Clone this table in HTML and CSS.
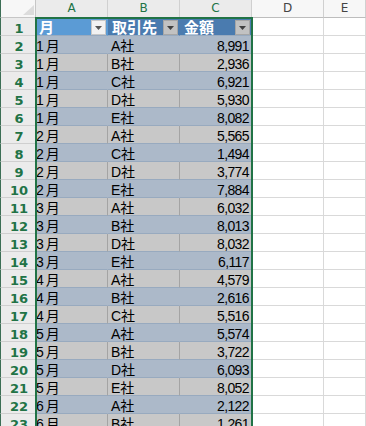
FILE: index.html
```html
<!DOCTYPE html>
<html lang="ja">
<head>
<meta charset="utf-8">
<title>Sheet</title>
<link rel="stylesheet" href="styles.css">
</head>
<body>
<div class="sheet">
  <div class="row">
    <div class="c corner"><svg class="tri" width="11" height="10" viewBox="0 0 11 10"><path d="M11 0V10H0Z" fill="#dcdcdc"/></svg></div>
    <div class="c ch">A</div>
    <div class="c ch">B</div>
    <div class="c ch">C</div>
    <div class="c ch off">D</div>
    <div class="c ch off">E</div>
  </div>
  <div class="row">
    <div class="c rh">1</div>
    <div class="c th active"><span class="tt">月</span><span class="fb"><svg width="7" height="4" viewBox="0 0 7 4"><path d="M0 0H7L3.5 4Z" fill="#555"/></svg></span></div>
    <div class="c th"><span class="tt">取引先</span><span class="fb"><svg width="7" height="4" viewBox="0 0 7 4"><path d="M0 0H7L3.5 4Z" fill="#404040"/></svg></span></div>
    <div class="c th"><span class="tt">金額</span><span class="fb"><svg width="7" height="4" viewBox="0 0 7 4"><path d="M0 0H7L3.5 4Z" fill="#404040"/></svg></span></div>
    <div class="c e"></div>
    <div class="c e"></div>
  </div>
  <div class="row b"><div class="c rh">2</div><div class="c td m">1月</div><div class="c td s">A社</div><div class="c td n">8,991</div><div class="c e"></div><div class="c e"></div></div>
  <div class="row g"><div class="c rh">3</div><div class="c td m">1月</div><div class="c td s">B社</div><div class="c td n">2,936</div><div class="c e"></div><div class="c e"></div></div>
  <div class="row b"><div class="c rh">4</div><div class="c td m">1月</div><div class="c td s">C社</div><div class="c td n">6,921</div><div class="c e"></div><div class="c e"></div></div>
  <div class="row g"><div class="c rh">5</div><div class="c td m">1月</div><div class="c td s">D社</div><div class="c td n">5,930</div><div class="c e"></div><div class="c e"></div></div>
  <div class="row b"><div class="c rh">6</div><div class="c td m">1月</div><div class="c td s">E社</div><div class="c td n">8,082</div><div class="c e"></div><div class="c e"></div></div>
  <div class="row g"><div class="c rh">7</div><div class="c td m">2月</div><div class="c td s">A社</div><div class="c td n">5,565</div><div class="c e"></div><div class="c e"></div></div>
  <div class="row b"><div class="c rh">8</div><div class="c td m">2月</div><div class="c td s">C社</div><div class="c td n">1,494</div><div class="c e"></div><div class="c e"></div></div>
  <div class="row g"><div class="c rh">9</div><div class="c td m">2月</div><div class="c td s">D社</div><div class="c td n">3,774</div><div class="c e"></div><div class="c e"></div></div>
  <div class="row b"><div class="c rh">10</div><div class="c td m">2月</div><div class="c td s">E社</div><div class="c td n">7,884</div><div class="c e"></div><div class="c e"></div></div>
  <div class="row g"><div class="c rh">11</div><div class="c td m">3月</div><div class="c td s">A社</div><div class="c td n">6,032</div><div class="c e"></div><div class="c e"></div></div>
  <div class="row b"><div class="c rh">12</div><div class="c td m">3月</div><div class="c td s">B社</div><div class="c td n">8,013</div><div class="c e"></div><div class="c e"></div></div>
  <div class="row g"><div class="c rh">13</div><div class="c td m">3月</div><div class="c td s">D社</div><div class="c td n">8,032</div><div class="c e"></div><div class="c e"></div></div>
  <div class="row b"><div class="c rh">14</div><div class="c td m">3月</div><div class="c td s">E社</div><div class="c td n">6,117</div><div class="c e"></div><div class="c e"></div></div>
  <div class="row g"><div class="c rh">15</div><div class="c td m">4月</div><div class="c td s">A社</div><div class="c td n">4,579</div><div class="c e"></div><div class="c e"></div></div>
  <div class="row b"><div class="c rh">16</div><div class="c td m">4月</div><div class="c td s">B社</div><div class="c td n">2,616</div><div class="c e"></div><div class="c e"></div></div>
  <div class="row g"><div class="c rh">17</div><div class="c td m">4月</div><div class="c td s">C社</div><div class="c td n">5,516</div><div class="c e"></div><div class="c e"></div></div>
  <div class="row b"><div class="c rh">18</div><div class="c td m">5月</div><div class="c td s">A社</div><div class="c td n">5,574</div><div class="c e"></div><div class="c e"></div></div>
  <div class="row g"><div class="c rh">19</div><div class="c td m">5月</div><div class="c td s">B社</div><div class="c td n">3,722</div><div class="c e"></div><div class="c e"></div></div>
  <div class="row b"><div class="c rh">20</div><div class="c td m">5月</div><div class="c td s">D社</div><div class="c td n">6,093</div><div class="c e"></div><div class="c e"></div></div>
  <div class="row g"><div class="c rh">21</div><div class="c td m">5月</div><div class="c td s">E社</div><div class="c td n">8,052</div><div class="c e"></div><div class="c e"></div></div>
  <div class="row b"><div class="c rh">22</div><div class="c td m">6月</div><div class="c td s">A社</div><div class="c td n">2,122</div><div class="c e"></div><div class="c e"></div></div>
  <div class="row g"><div class="c rh">23</div><div class="c td m">6月</div><div class="c td s">B社</div><div class="c td n">1,261</div><div class="c e"></div><div class="c e"></div></div>
  <div class="sel"></div>
</div>
</body>
</html>
```
FILE: styles.css
```css
html, body {
  margin: 0;
  padding: 0;
  height: 426px;
  overflow: hidden;
  background: #ffffff;
}

.sheet {
  position: relative;
  display: flex;
  flex-direction: column;
  width: 366px;
}

.row {
  display: grid;
  grid-template-columns: 36px 72px 72px 72px 72px 42px;
  height: 18px;
}

.c {
  box-sizing: border-box;
  height: 18px;
  border-right: 1px solid #d9d9d9;
  border-bottom: 1px solid #d9d9d9;
  overflow: hidden;
  white-space: nowrap;
}

.corner {
  background: #f7f7f7;
  border-left: 1px solid #3c6e55;
  border-right-color: #c6c6c6;
  border-bottom-color: #c6c6c6;
  display: flex;
  justify-content: flex-end;
  align-items: flex-end;
  padding: 0 1px 2px 0;
}

.ch {
  background: #ebebeb;
  color: #217346;
  font-family: "DejaVu Sans", sans-serif;
  font-size: 12px;
  line-height: 12px;
  padding-top: 2px;
  text-align: center;
  border-right-color: #d0d0d0;
  border-bottom-color: #bdbdbd;
}

.ch.off {
  background: #f7f7f7;
  color: #444444;
}

.rh {
  background: #ebebeb;
  color: #217346;
  font-family: "DejaVu Sans", sans-serif;
  font-weight: bold;
  font-size: 13px;
  line-height: 13px;
  padding-top: 4px;
  padding-left: 2px;
  text-align: center;
  border-left: 1px solid #3c6e55;
  border-right-color: #c6c6c6;
  border-bottom-color: #cfcfcf;
}

.th {
  background: #4a7baf;
  color: #ffffff;
  font-family: "Noto Sans CJK JP", sans-serif;
  font-weight: bold;
  font-size: 15px;
  line-height: 15px;
  display: flex;
  justify-content: space-between;
  align-items: flex-start;
  padding-left: 4px;
  overflow: visible;
  border-right-color: transparent;
  border-bottom-color: #98aabf;
}

.th.active {
  background: #5b9bd5;
  padding-left: 3px;
}

.tt {
  display: block;
  padding-top: 1px;
}

.fb {
  box-sizing: border-box;
  width: 15px;
  height: 15px;
  margin: 2px 1px 0 0;
  border: 1px solid #a6a6a6;
  background: #c2c2c2;
  display: flex;
  align-items: center;
  justify-content: center;
}

.th.active .fb {
  background: #f2f2f2;
  border-color: #c8c8c8;
}

.td {
  font-family: "Liberation Sans", "Noto Sans CJK JP", sans-serif;
  font-size: 14px;
  line-height: 14px;
  padding-top: 3px;
  color: #000000;
  border-bottom-color: #98aabf;
}

.b .td {
  background: #acb9c9;
  border-right-color: transparent;
}

.g .td {
  background: #c8c8c8;
  border-right-color: #a4a4a4;
}

.td.m {
  padding-left: 0;
  letter-spacing: 2px;
}

.td.s {
  padding-left: 3px;
}

.td.n {
  text-align: right;
  padding-right: 2px;
  letter-spacing: -0.6px;
}

.e {
  background: #ffffff;
}

.sel {
  position: absolute;
  left: 35px;
  top: 17px;
  width: 218px;
  height: 480px;
  box-sizing: border-box;
  border: 2px solid #217346;
  pointer-events: none;
}
```
